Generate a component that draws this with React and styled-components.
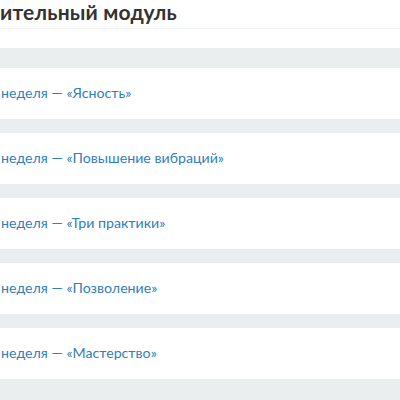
import React from "react";
import styled, { createGlobalStyle } from "styled-components";

const Global = createGlobalStyle`
  body {
    margin: 0;
    background: #fff;
    font-family: "Lato", "Open Sans", sans-serif;
  }
`;

const Page = styled.div`
  width: 400px;
  height: 400px;
  overflow: hidden;
  background: #eaeeee;
`;

const Header = styled.div`
  background: #fff;
  height: 48px;
  h2 {
    margin: 0;
    height: 28px;
    border-bottom: 1px solid #f2f2f2;
    font-size: 21px;
    font-weight: 700;
    line-height: 24px;
    color: #333;
    letter-spacing: 0.2px;
    white-space: nowrap;
  }
`;

const List = styled.ul`
  list-style: none;
  margin: 0;
  padding: 20px 0 0;
  display: flex;
  flex-direction: column;
  gap: 14px;
`;

const Week = styled.li`
  height: 51px;
  background: #fff;
  display: flex;
  align-items: center;
  padding: 0 0 3px 1px;
  box-sizing: border-box;
  font-size: 14.2px;
  color: #3080ba;
  white-space: nowrap;
`;

const weeks = ["Ясность", "Повышение вибраций", "Три практики", "Позволение", "Мастерство"];

const App = () => {
  return (
    <Page>
      <Global />
      <Header>
        <h2>ительный модуль</h2>
      </Header>
      <List>
        {weeks.map((w) => (
          <Week key={w}>неделя — «{w}»</Week>
        ))}
      </List>
    </Page>
  );
};

export default App;
